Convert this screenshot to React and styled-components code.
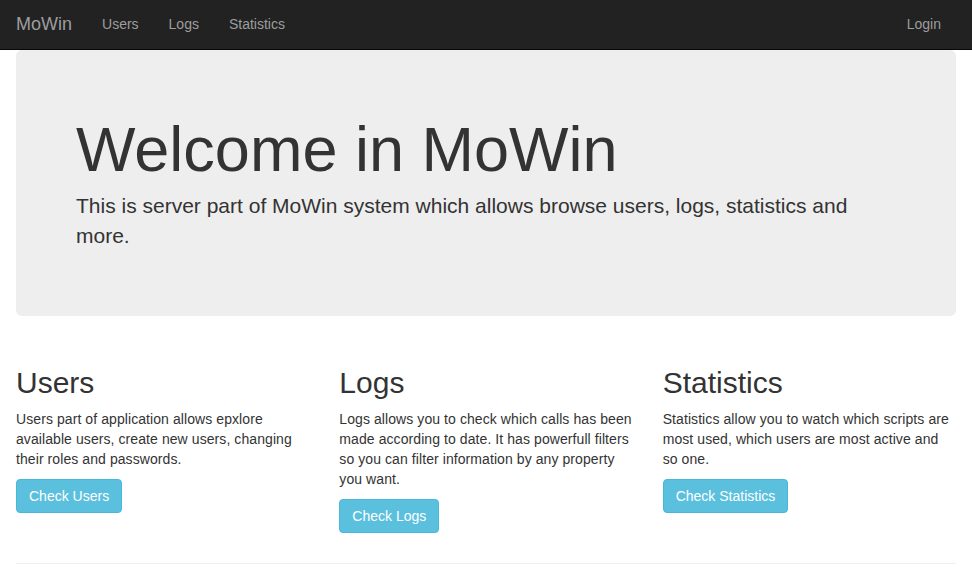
import React from "react";
import styled, { createGlobalStyle } from "styled-components";

const Global = createGlobalStyle`
  html, body { margin: 0; padding: 0; background: #fff; }
  body {
    font-family: "Liberation Sans", Arial, Helvetica, sans-serif;
    font-size: 14px;
    line-height: 1.42857143;
    color: #333;
  }
  * { box-sizing: border-box; }
`;

const Navbar = styled.nav`
  background: #222;
  border-bottom: 1px solid #080808;
  height: 50px;
`;

const NavInner = styled.div`
  width: 970px;
  margin: 0 auto;
  padding: 0 15px;
  display: flex;
  align-items: stretch;
  height: 49px;
`;

const Brand = styled.a`
  margin-left: -15px;
  padding: 14px 15px 15px;
  font-size: 18px;
  line-height: 20px;
  color: #9d9d9d;
  text-decoration: none;
`;

const NavList = styled.ul`
  list-style: none;
  margin: 0;
  padding: 0;
  display: flex;
  margin-left: ${(p) => (p.$right ? "auto" : "0")};
`;

const NavLink = styled.a`
  display: block;
  padding: 14px 15px 15px;
  line-height: 20px;
  font-size: 14px;
  color: #9d9d9d;
  text-decoration: none;
`;

const Container = styled.div`
  width: 970px;
  margin: 0 auto;
  padding: 0 15px;
`;

const Jumbotron = styled.div`
  background: #eee;
  border-radius: 6px;
  padding: 48px 60px;
  margin-bottom: 30px;
`;

const Title = styled.h1`
  font-size: 63px;
  font-weight: 500;
  line-height: 1.1;
  margin: 17px 0 7px;
  color: #333;
`;

const Lead = styled.p`
  font-size: 21px;
  font-weight: 200;
  line-height: 30px;
  margin: 0 0 17px;
`;

const Row = styled.div`
  display: grid;
  grid-template-columns: repeat(3, 1fr);
  margin: 0 -15px;
`;

const Col = styled.div`
  padding: 0 15px;
`;

const ColTitle = styled.h2`
  font-size: 30px;
  font-weight: 500;
  line-height: 1.1;
  margin: 20px 0 10px;
  color: #333;
`;

const Text = styled.p`
  margin: 0 0 10px;
  letter-spacing: 0.08px;
`;

const Button = styled.a`
  display: inline-block;
  padding: 6px 12px;
  font-size: 14px;
  line-height: 20px;
  color: #fff;
  background: #5bc0de;
  border: 1px solid #46b8da;
  border-radius: 4px;
  text-decoration: none;
  letter-spacing: 0;
`;

const Rule = styled.hr`
  margin: 20px 0;
  border: 0;
  border-top: 1px solid #eee;
`;

const features = [
  {
    title: "Users",
    text: "Users part of application allows epxlore available users, create new users, changing their roles and passwords.",
    button: "Check Users",
  },
  {
    title: "Logs",
    text: "Logs allows you to check which calls has been made according to date. It has powerfull filters so you can filter information by any property you want.",
    button: "Check Logs",
  },
  {
    title: "Statistics",
    text: "Statistics allow you to watch which scripts are most used, which users are most active and so one.",
    button: "Check Statistics",
  },
];

export default function App() {
  return (
    <>
      <Global />
      <Navbar>
        <NavInner>
          <Brand href="#">MoWin</Brand>
          <NavList>
            <li><NavLink href="#">Users</NavLink></li>
            <li><NavLink href="#">Logs</NavLink></li>
            <li><NavLink href="#">Statistics</NavLink></li>
          </NavList>
          <NavList $right>
            <li><NavLink href="#">Login</NavLink></li>
          </NavList>
        </NavInner>
      </Navbar>
      <Container>
        <Jumbotron>
          <Title>Welcome in MoWin</Title>
          <Lead>
            This is server part of MoWin system which allows browse users, logs, statistics and more.
          </Lead>
        </Jumbotron>
        <Row>
          {features.map((f) => (
            <Col key={f.title}>
              <ColTitle>{f.title}</ColTitle>
              <Text>{f.text}</Text>
              <Text>
                <Button href="#">{f.button}</Button>
              </Text>
            </Col>
          ))}
        </Row>
        <Rule />
      </Container>
    </>
  );
}
